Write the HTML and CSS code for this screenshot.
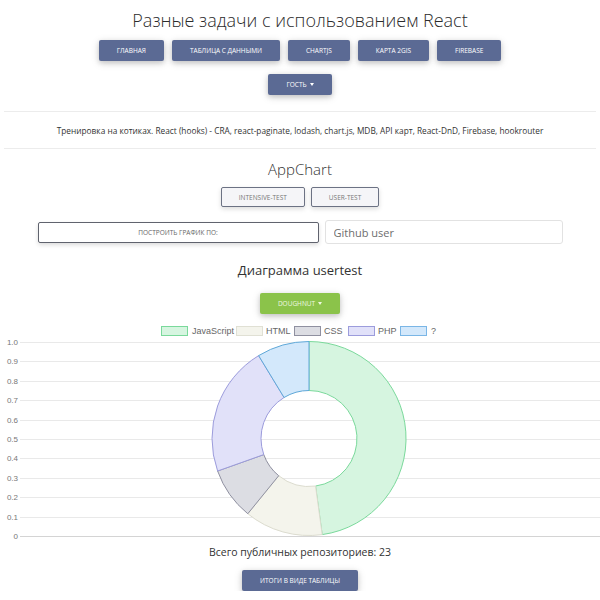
FILE: index.html
```html
<!DOCTYPE html>
<html lang="ru">
<head>
<meta charset="utf-8">
<title>React</title>
<link rel="stylesheet" href="styles.css">
</head>
<body>
<h1 class="title">Разные задачи с использованием React</h1>
<nav class="nav">
  <a class="btn btn-indigo">Главная</a>
  <a class="btn btn-indigo">Таблица с данными</a>
  <a class="btn btn-indigo">ChartJS</a>
  <a class="btn btn-indigo">Карта 2GIS</a>
  <a class="btn btn-indigo">Firebase</a>
</nav>
<div class="nav nav-second">
  <a class="btn btn-indigo">Гость <span class="caret"></span></a>
</div>
<hr class="rule rule-top">
<p class="desc">Тренировка на котиках. React (hooks) - CRA, react-paginate, lodash, chart.js, MDB, API карт, React-DnD, Firebase, hookrouter</p>
<hr class="rule rule-bottom">
<h2 class="subtitle">AppChart</h2>
<div class="toggles">
  <button class="btn-light">intensive-test</button>
  <button class="btn-light">user-test</button>
</div>
<div class="form-row">
  <button class="btn-outline">Построить график по:</button>
  <input class="input" type="text" placeholder="Github user">
</div>
<h3 class="chart-title">Диаграмма usertest</h3>
<div class="center-row">
  <a class="btn btn-green">Doughnut <span class="caret"></span></a>
</div>
<svg class="chart" width="600" height="220" viewBox="0 0 600 220">
  <g class="legend" font-family="Liberation Sans, Arial, sans-serif" font-size="9" fill="#666">
    <rect x="161.5" y="4.5" width="26" height="9" fill="#d6f5e0" stroke="#7ad99b"/>
    <text x="192" y="12">JavaScript</text>
    <rect x="236.5" y="4.5" width="26" height="9" fill="#f4f4ec" stroke="#e0e0d4"/>
    <text x="266" y="12">HTML</text>
    <rect x="294.5" y="4.5" width="26" height="9" fill="#dcdde3" stroke="#8f90a0"/>
    <text x="324" y="12">CSS</text>
    <rect x="348.5" y="4.5" width="26" height="9" fill="#e1e1f9" stroke="#9c9cdc"/>
    <text x="378" y="12">PHP</text>
    <rect x="400.5" y="4.5" width="26" height="9" fill="#d3e8fb" stroke="#7ab6e6"/>
    <text x="431" y="12">?</text>
  </g>
  <g class="grid" stroke="#e9e9e9" stroke-width="1">
    <line x1="20" y1="20.5" x2="600" y2="20.5"/>
    <line x1="20" y1="39.5" x2="600" y2="39.5"/>
    <line x1="20" y1="59.5" x2="600" y2="59.5"/>
    <line x1="20" y1="78.5" x2="600" y2="78.5"/>
    <line x1="20" y1="98.5" x2="600" y2="98.5"/>
    <line x1="20" y1="117.5" x2="600" y2="117.5"/>
    <line x1="20" y1="136.5" x2="600" y2="136.5"/>
    <line x1="20" y1="156.5" x2="600" y2="156.5"/>
    <line x1="20" y1="175.5" x2="600" y2="175.5"/>
    <line x1="20" y1="195.5" x2="600" y2="195.5"/>
    <line x1="20" y1="214.5" x2="600" y2="214.5" stroke="#d4d4d4"/>
  </g>
  <g class="ticks" font-family="Liberation Sans, Arial, sans-serif" font-size="8" fill="#777" text-anchor="end">
    <text x="18" y="23">1.0</text>
    <text x="18" y="42">0.9</text>
    <text x="18" y="62">0.8</text>
    <text x="18" y="81">0.7</text>
    <text x="18" y="101">0.6</text>
    <text x="18" y="120">0.5</text>
    <text x="18" y="139">0.4</text>
    <text x="18" y="159">0.3</text>
    <text x="18" y="178">0.2</text>
    <text x="18" y="198">0.1</text>
    <text x="18" y="217">0</text>
  </g>
  <g class="donut" stroke-width="1">
    <path d="M309,19.5 A97,97 0 0 1 322.21,212.6 L315.54,164.05 A48,48 0 0 0 309,68.5 Z" fill="#d6f5e0" stroke="#7ad99b"/>
    <path d="M322.21,212.6 A97,97 0 0 1 247.78,191.74 L278.71,153.73 A48,48 0 0 0 315.54,164.05 Z" fill="#f4f4ec" stroke="#dcdccf"/>
    <path d="M247.78,191.74 A97,97 0 0 1 217.61,149 L263.77,132.58 A48,48 0 0 0 278.71,153.73 Z" fill="#dcdde3" stroke="#8f90a0"/>
    <path d="M217.61,149 A97,97 0 0 1 258.61,33.62 L284.06,75.49 A48,48 0 0 0 263.77,132.58 Z" fill="#e1e1f9" stroke="#9c9cdc"/>
    <path d="M258.61,33.62 A97,97 0 0 1 309,19.5 L309,68.5 A48,48 0 0 0 284.06,75.49 Z" fill="#d3e8fb" stroke="#5fa8d8"/>
  </g>
</svg>
<p class="total">Всего публичных репозиториев: 23</p>
<div class="center-row">
  <a class="btn btn-indigo">Итоги в виде таблицы</a>
</div>
</body>
</html>
```
FILE: styles.css
```css
* { box-sizing: border-box; }
body {
  margin: 0;
  background: #fff;
  font-family: "Open Sans", "Noto Sans", sans-serif;
  color: #333;
}
.title {
  margin: 8px 0 0;
  font-size: 18px;
  line-height: 24px;
  font-weight: 300;
  text-align: center;
  color: #2b2b2b;
}
.nav {
  display: flex;
  justify-content: center;
  gap: 8px;
  margin-top: 8px;
}
.nav-second { margin-top: 13px; }
.btn {
  display: inline-flex;
  align-items: center;
  justify-content: center;
  height: 21px;
  padding: 0 18px;
  font-size: 6.5px;
  text-transform: uppercase;
  color: #fff;
  border-radius: 2px;
  box-shadow: 0 2px 5px rgba(0,0,0,.16), 0 2px 10px rgba(0,0,0,.12);
}
.btn-indigo { background: #5b6a94; }
.btn-green { background: #8bc34a; color: #eef8e0; }
.caret {
  display: inline-block;
  margin-left: 3px;
  border-left: 2.5px solid transparent;
  border-right: 2.5px solid transparent;
  border-top: 3px solid currentColor;
}
.rule {
  border: 0;
  border-top: 1px solid #ececec;
  margin: 0 4px;
}
.rule-top { margin-top: 16px; }
.desc {
  margin: 12px 0 0;
  font-size: 8.3px;
  line-height: 14px;
  text-align: center;
  color: #333;
}
.rule-bottom { margin-top: 10px; }
.subtitle {
  margin: 10px 0 0;
  font-size: 15px;
  line-height: 20px;
  font-weight: 300;
  text-align: center;
  color: #333;
}
.toggles {
  display: flex;
  justify-content: center;
  gap: 6px;
  margin-top: 8px;
}
.btn-light {
  height: 20px;
  padding: 0 17px;
  background: #f5f5f8;
  border: 1.5px solid #6c7284;
  border-radius: 2px;
  font-family: inherit;
  font-size: 6.5px;
  text-transform: uppercase;
  color: #777;
  box-shadow: 0 2px 5px rgba(0,0,0,.14);
}
.form-row {
  display: flex;
  justify-content: center;
  align-items: center;
  gap: 6px;
  margin-top: 13px;
}
.btn-outline {
  width: 281px;
  height: 21px;
  background: #fff;
  border: 1.5px solid #60636e;
  border-radius: 2px;
  font-family: inherit;
  font-size: 6.5px;
  text-transform: uppercase;
  color: #666;
  box-shadow: 0 2px 4px rgba(0,0,0,.14);
}
.input {
  width: 238px;
  height: 24px;
  padding: 0 8px;
  border: 1px solid #e2e2e2;
  border-radius: 3px;
  font-family: inherit;
  font-size: 11px;
  color: #555;
}
.input::placeholder { color: #6d6d6d; }
.chart-title {
  margin: 17px 0 0;
  font-size: 13px;
  line-height: 18px;
  font-weight: 400;
  text-align: center;
  color: #333;
}
.center-row {
  display: flex;
  justify-content: center;
  margin-top: 14px;
}
.chart {
  display: block;
  margin-top: 8px;
}
.total {
  margin: 3px 0 0;
  font-size: 10.5px;
  line-height: 14px;
  text-align: center;
  color: #333;
}
.total + .center-row { margin-top: 11px; }
```
